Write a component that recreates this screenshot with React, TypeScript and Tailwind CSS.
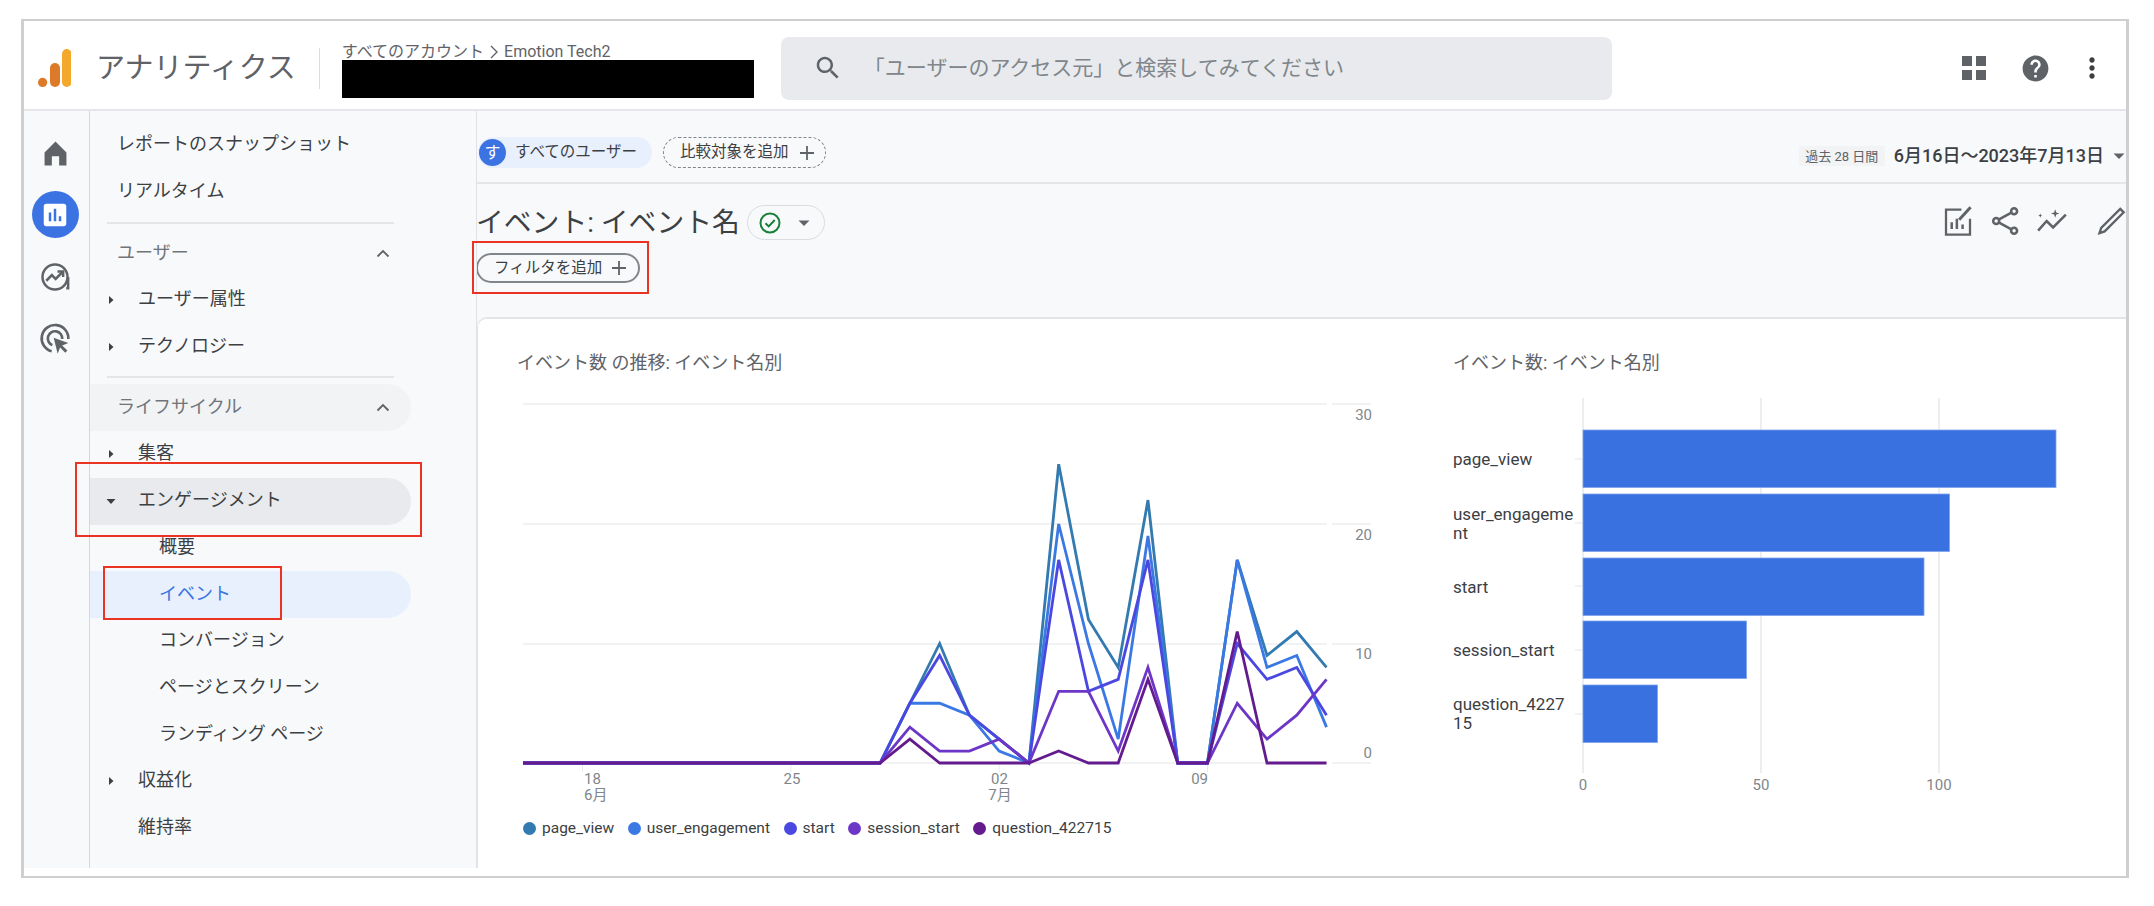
import React from "react";

const G = "#5f6368";

function Caret({ dir = "right" }: { dir?: "right" | "down" }) {
  return (
    <svg width="12" height="12" viewBox="0 0 12 12" className="shrink-0">
      {dir === "right" ? <path d="M4 2l4.5 4L4 10z" fill="#3c4043" /> : <path d="M1.5 4h9L6 9z" fill="#3c4043" />}
    </svg>
  );
}

function ChevronUp() {
  return (
    <svg width="16" height="16" viewBox="0 0 16 16" className="shrink-0">
      <path d="M2.5 10.5L8 5l5.5 5.5" fill="none" stroke="#5f6368" strokeWidth="1.8" />
    </svg>
  );
}

function Row({
  label,
  level = 0,
  caret,
  chevron,
  bg = "",
  text = "text-[#3c4043]",
}: {
  label: string;
  level?: 0 | 1 | 2;
  caret?: "right" | "down";
  chevron?: boolean;
  bg?: string;
  text?: string;
}) {
  const pad = level === 0 ? "pl-[27px]" : level === 1 ? "pl-[48px]" : "pl-[69px]";
  return (
    <div className={`relative h-[46.7px] w-[321px] rounded-r-full flex items-center pr-[20px] ${pad} ${bg}`}>
      {caret && (
        <span className="absolute left-[15px] top-1/2 -translate-y-1/2 flex">
          <Caret dir={caret} />
        </span>
      )}
      <span className={`pb-[2px] text-[18px] leading-none ${text}`}>{label}</span>
      {chevron && (
        <span className="ml-auto flex">
          <ChevronUp />
        </span>
      )}
    </div>
  );
}

function Divider({ top, bottom }: { top: string; bottom: string }) {
  return <div className={`ml-[17px] w-[287px] h-[2px] bg-[#e3e5e8] ${top} ${bottom}`} />;
}

function PlusIcon({ size = 18 }: { size?: number }) {
  return (
    <svg width={size} height={size} viewBox="0 0 18 18" className="shrink-0">
      <path d="M9 2v14M2 9h14" stroke="#5f6368" strokeWidth="1.8" fill="none" />
    </svg>
  );
}

const X = (i: number) => 523 + 29.76 * i;
const Y = (v: number) => 762 - 11.95 * v;
const Z = [0, 0, 0, 0, 0, 0, 0, 0, 0, 0, 0, 0];
const SERIES = [
  { name: "page_view", color: "#337ab0", v: [0, 5, 10, 4, 2, 0, 25, 12, 8, 22, 0, 0, 17, 9, 11, 8] },
  { name: "user_engagement", color: "#3a78e4", v: [0, 5, 5, 4, 1, 0, 20, 10, 2, 19, 0, 0, 17, 8, 9, 3] },
  { name: "start", color: "#4a48e0", v: [0, 5, 9, 4, 2, 0, 17, 6, 7, 17, 0, 0, 10, 7, 8, 4] },
  { name: "session_start", color: "#6c36c6", v: [0, 3, 1, 1, 2, 0, 6, 6, 1, 8, 0, 0, 5, 2, 4, 7] },
  { name: "question_422715", color: "#631b8d", v: [0, 2, 0, 0, 0, 0, 1, 0, 0, 7, 0, 0, 11, 0, 0, 0] },
];

function LineChart() {
  return (
    <svg width="880" height="420" viewBox="517 390 880 420" className="block">
      {[403, 523, 643, 762].map((y) => (
        <g key={y} stroke="#eceef0" strokeWidth="1.5">
          <line x1="523" x2="1327" y1={y} y2={y} />
          <line x1="1332" x2="1371" y1={y} y2={y} />
        </g>
      ))}
      {[2, 9, 16, 23].map((i) => (
        <line key={i} x1={X(i)} x2={X(i)} y1="762" y2="771" stroke="#e8eaed" />
      ))}
      <g fill="#80868b" fontSize="15" textAnchor="end">
        <text x="1372" y="418.5">30</text>
        <text x="1372" y="538.5">20</text>
        <text x="1372" y="657.5">10</text>
        <text x="1372" y="757">0</text>
      </g>
      <g fill="#80868b" fontSize="15">
        <text x="584" y="783">18</text>
        <text x="584" y="799">6月</text>
        <text x="792" y="783" textAnchor="middle">25</text>
        <text x="999.5" y="783" textAnchor="middle">02</text>
        <text x="1000" y="799" textAnchor="middle">7月</text>
        <text x="1208" y="783" textAnchor="end">09</text>
      </g>
      {SERIES.map((s) => (
        <polyline
          key={s.name}
          fill="none"
          stroke={s.color}
          strokeWidth="2.8"
          strokeLinejoin="miter"
          points={[...Z, ...s.v].map((v, i) => `${X(i)},${Y(v)}`).join(" ")}
        />
      ))}
    </svg>
  );
}

function BarChart() {
  const bars = [
    { y: 429, x2: 2056, c: 458 },
    { y: 493, x2: 1949.5, c: 522 },
    { y: 557, x2: 1924, c: 585 },
    { y: 620, x2: 1746.5, c: 649 },
    { y: 684, x2: 1657.5, c: 713 },
  ];
  return (
    <svg width="674" height="410" viewBox="1453 390 674 410" className="block">
      {[1583, 1761, 1939].map((x) => (
        <line key={x} x1={x} x2={x} y1="397" y2="772" stroke="#e3e5e8" strokeWidth="1.3" />
      ))}
      {bars.map((b) => (
        <g key={b.y}>
          <line x1="1575" x2="1583" y1={b.c} y2={b.c} stroke="#e3e5e8" />
          <rect x="1583" y={b.y} width={b.x2 - 1583} height="57.5" fill="#3971e0" stroke="#7ea4ee" strokeWidth="0.8" />
        </g>
      ))}
      <g fill="#3c4043" fontSize="17">
        <text x="1453" y="463.5">page_view</text>
        <text x="1453" y="518.5">user_engageme</text>
        <text x="1453" y="537.5">nt</text>
        <text x="1453" y="591.5">start</text>
        <text x="1453" y="654.5">session_start</text>
        <text x="1453" y="708.5">question_4227</text>
        <text x="1453" y="727.5">15</text>
      </g>
      <g fill="#80868b" fontSize="15" textAnchor="middle">
        <text x="1583" y="788.5">0</text>
        <text x="1761" y="788.5">50</text>
        <text x="1939" y="788.5">100</text>
      </g>
    </svg>
  );
}

function Legend() {
  return (
    <div className="flex items-center pl-[6px] mt-[10px] gap-x-[13.5px] text-[15.5px] leading-none text-[#3c4043]">
      {SERIES.map((s) => (
        <div key={s.name} className="flex items-center gap-x-[6px]">
          <span className="w-[13px] h-[13px] rounded-full" style={{ backgroundColor: s.color }} />
          <span>{s.name}</span>
        </div>
      ))}
    </div>
  );
}

export default function App() {
  return (
    <div className="relative w-[2154px] h-[906px] bg-white pt-[19px] pl-[21px] overflow-hidden font-['Roboto','Noto_Sans_CJK_JP',sans-serif]">
      <div className="w-[2108px] h-[859px] border-x-[3px] border-y-2 border-[#cfcfcf] bg-white overflow-hidden">
        {/* header */}
        <header className="h-[90px] border-b-2 border-[#e4e6e9] flex items-center pt-[6px] pl-[14px] pr-[18px]">
          <svg width="33" height="38" viewBox="0 0 33 38" className="shrink-0">
            <rect x="24" y="0" width="9.5" height="38" rx="4.7" fill="#f4a92c" />
            <rect x="12" y="14" width="10" height="24" rx="5" fill="#dc7a2a" />
            <circle cx="4.6" cy="33.4" r="4.6" fill="#dc7a2a" />
          </svg>
          <span className="ml-[25px] text-[29px] leading-none text-[#5f6368] whitespace-nowrap">アナリティクス</span>
          <span className="ml-[23px] w-px h-[41px] bg-[#dadce0]" />
          <div className="ml-[22px] mt-[2px] w-[412px] shrink-0 flex flex-col">
            <div className="flex items-center h-[20px] pt-[3px] text-[16px] leading-none text-[#5f6368] whitespace-nowrap">
              <span>すべてのアカウント</span>
              <svg width="16" height="16" viewBox="0 0 16 16" className="mx-[2px]">
                <path d="M5 2l6 6-6 6" fill="none" stroke="#5f6368" strokeWidth="1.4" />
              </svg>
              <span>Emotion Tech2</span>
            </div>
            <div className="h-[38px] bg-black" />
          </div>
          <div className="ml-[27px] w-[831px] h-[63px] rounded-[8px] bg-[#e8eaed] flex items-center pl-[32px]">
            <svg width="30" height="30" viewBox="0 0 24 24" className="shrink-0">
              <path
                fill={G}
                d="M15.5 14h-.79l-.28-.27C15.41 12.59 16 11.11 16 9.5 16 5.91 13.09 3 9.5 3S3 5.91 3 9.5 5.91 16 9.5 16c1.61 0 3.09-.59 4.23-1.57l.27.28v.79l5 4.99L20.49 19l-4.99-5zm-6 0C7.01 14 5 11.99 5 9.5S7.01 5 9.5 5 14 7.01 14 9.5 11.99 14 9.5 14z"
              />
            </svg>
            <span className="ml-[21px] text-[21px] leading-none text-[#80868b] whitespace-nowrap">「ユーザーのアクセス元」と検索してみてください</span>
          </div>
          <div className="ml-auto flex items-center">
            <svg width="24" height="24" viewBox="0 0 24 24" className="shrink-0">
              <path fill={G} d="M0 0h10v10H0zM14 0h10v10H14zM0 14h10v10H0zM14 14h10v10H14z" />
            </svg>
            <svg width="31" height="31" viewBox="0 0 24 24" className="ml-[34px] shrink-0">
              <path
                fill={G}
                d="M12 2C6.48 2 2 6.48 2 12s4.48 10 10 10 10-4.48 10-10S17.52 2 12 2zm1 17h-2v-2h2v2zm2.07-7.75l-.9.92C13.45 12.9 13 13.5 13 15h-2v-.5c0-1.1.45-2.1 1.17-2.83l1.24-1.26c.37-.36.59-.86.59-1.41 0-1.1-.9-2-2-2s-2 .9-2 2H8c0-2.21 1.79-4 4-4s4 1.79 4 4c0 .88-.36 1.68-.93 2.25z"
              />
            </svg>
            <svg width="32" height="32" viewBox="0 0 24 24" className="ml-[25px] shrink-0">
              <path
                fill="#3c4043"
                d="M12 8c1.1 0 2-.9 2-2s-.9-2-2-2-2 .9-2 2 .9 2 2 2zm0 2c-1.1 0-2 .9-2 2s.9 2 2 2 2-.9 2-2-.9-2-2-2zm0 6c-1.1 0-2 .9-2 2s.9 2 2 2 2-.9 2-2-.9-2-2-2z"
              />
            </svg>
          </div>
        </header>

        <div className="flex h-[757px]">
          {/* rail */}
          <aside className="w-[66px] shrink-0 bg-[#f8f9fb] border-r border-[#d5d7da] flex flex-col items-center pt-[18px] pr-[3px] gap-y-[15px]">
            <div className="w-[47px] h-[47px] flex items-center justify-center">
              <svg width="25" height="26" viewBox="0 0 24 24">
                <path fill={G} d="M1.5 11.5L12 1l10.5 10.5V24H15.5v-9h-7v9h-7z" />
              </svg>
            </div>
            <div className="w-[47px] h-[47px] rounded-full bg-[#3b74e2] flex items-center justify-center">
              <svg width="30" height="30" viewBox="0 0 24 24">
                <path
                  fill="#fff"
                  d="M19 3H5c-1.1 0-2 .9-2 2v14c0 1.1.9 2 2 2h14c1.1 0 2-.9 2-2V5c0-1.1-.9-2-2-2zM9 17H7v-7h2v7zm4 0h-2V7h2v10zm4 0h-2v-4h2v4z"
                />
              </svg>
            </div>
            <div className="w-[47px] h-[47px] flex items-center justify-center">
              <svg width="30" height="30" viewBox="0 0 24 24" fill="none" stroke={G} strokeWidth="2">
                <circle cx="12" cy="12" r="10" />
                <path d="M21 21h1.5v-9M5 15l4.5-4.5 3 3L18 8" />
                <path d="M14 7.5h4.5V12" />
              </svg>
            </div>
            <div className="w-[47px] h-[47px] flex items-center justify-center">
              <svg width="32" height="32" viewBox="0 0 24 24" fill="none" stroke={G} strokeWidth="2">
                <path d="M9.5 21.2A10 10 0 1 1 22 12" />
                <path d="M10 16.6A5.4 5.4 0 1 1 17.4 12" />
                <path d="M11 11l11 4-4.6 1.8 3.9 3.9-1.6 1.6-3.9-3.9L14 23z" fill={G} stroke="none" />
              </svg>
            </div>
          </aside>

          {/* nav */}
          <nav className="w-[387px] shrink-0 bg-[#f8f9fb] border-r border-[#e0e2e5] pt-[11px]">
            <Row label="レポートのスナップショット" />
            <Row label="リアルタイム" />
            <Divider top="mt-[7px]" bottom="mb-[6px]" />
            <Row label="ユーザー" chevron text="text-[#70757a]" />
            <Row label="ユーザー属性" level={1} caret="right" />
            <Row label="テクノロジー" level={1} caret="right" />
            <Divider top="mt-[6px]" bottom="mb-[6px]" />
            <Row label="ライフサイクル" chevron text="text-[#70757a]" bg="bg-[#f1f3f4]" />
            <Row label="集客" level={1} caret="right" />
            <Row label="エンゲージメント" level={1} caret="down" bg="bg-[#e8eaed]" />
            <Row label="概要" level={2} />
            <Row label="イベント" level={2} bg="bg-[#e8f0fe]" text="text-[#3b74e2]" />
            <Row label="コンバージョン" level={2} />
            <Row label="ページとスクリーン" level={2} />
            <Row label="ランディング ページ" level={2} />
            <Row label="収益化" level={1} caret="right" />
            <Row label="維持率" level={1} />
          </nav>

          {/* main */}
          <main className="flex-1 min-w-0 bg-[#f8f9fb] overflow-hidden flex flex-col">
            <div className="h-[73px] shrink-0 border-b-2 border-[#e4e6e9] flex items-start pt-[26px] pl-px">
              <div className="h-[31px] w-[174px] rounded-full bg-[#e8f0fe] flex items-center pl-[1px]">
                <span className="w-[27px] h-[27px] rounded-full bg-[#3b74e2] text-white text-[16px] leading-none flex items-center justify-center">す</span>
                <span className="ml-[9px] text-[15.5px] leading-none text-[#3c4043] whitespace-nowrap">すべてのユーザー</span>
              </div>
              <div className="ml-[11px] h-[31px] w-[163px] rounded-full border border-dashed border-[#80868b] flex items-center pl-[16px]">
                <span className="text-[15.5px] leading-none text-[#3c4043] whitespace-nowrap">比較対象を追加</span>
                <span className="ml-[9px] flex">
                  <PlusIcon />
                </span>
              </div>
              <div className="ml-auto flex items-center h-[20px] mt-[9px]">
                <span className="h-[20px] w-[86px] bg-[#f1f3f4] text-[13px] leading-none text-[#5f6368] flex items-center justify-center whitespace-nowrap">過去 28 日間</span>
                <span className="ml-[9px] text-[18px] font-medium leading-none text-[#3c4043] whitespace-nowrap">6月16日～2023年7月13日</span>
                <svg width="14" height="14" viewBox="0 0 14 14" className="ml-[8px]">
                  <path d="M1.5 4.5h11L7 10z" fill={G} />
                </svg>
              </div>
            </div>

            <div className="flex items-start justify-between pt-[21px] shrink-0 h-[58px]">
              <div className="flex items-center -ml-px gap-x-[7px]">
                <h1 className="text-[27.8px] font-normal leading-[35px] text-[#3c4043] whitespace-nowrap">イベント: イベント名</h1>
                <div className="w-[78px] h-[35px] rounded-full border border-[#dadce0] flex items-center pl-[10px]">
                  <svg width="24" height="24" viewBox="0 0 24 24" className="shrink-0">
                    <circle cx="12" cy="12" r="9.5" fill="none" stroke="#188038" strokeWidth="2" />
                    <path d="M7.5 12.2l3.2 3.2 6-6.4" fill="none" stroke="#188038" strokeWidth="2" />
                  </svg>
                  <svg width="14" height="14" viewBox="0 0 14 14" className="ml-[15px]">
                    <path d="M1.5 4.5h11L7 10z" fill={G} />
                  </svg>
                </div>
              </div>
              <div className="flex items-center mr-[-1px]">
                <svg width="32" height="32" viewBox="0 0 28 28" fill="none" stroke={G} strokeWidth="2">
                  <path d="M17 4H3.5v22h21V12" />
                  <path d="M8.5 21v-6M13 21v-9M18 21v-4" strokeWidth="2.2" />
                  <path d="M15 13L25 2" strokeWidth="2.6" />
                </svg>
                <svg width="30" height="30" viewBox="0 0 26 26" fill="none" stroke={G} strokeWidth="2.2" className="ml-[17px]">
                  <circle cx="20" cy="4.5" r="2.6" />
                  <circle cx="4.5" cy="13" r="2.6" />
                  <circle cx="20" cy="21.5" r="2.6" />
                  <path d="M7 11.5L17.7 5.8M7 14.5l10.7 5.7" />
                </svg>
                <svg width="32" height="26" viewBox="0 0 30 24" fill="none" stroke={G} strokeWidth="2.4" className="ml-[15px]">
                  <path d="M2 21l8-9 6 6L28 6" />
                  <path d="M17 4l1-3 1 3 3 1-3 1-1 3-1-3-3-1zM4 9l.6-1.6L6 7l-1.4-.6L4 5l-.6 1.4L2 7l1.4.4z" fill={G} stroke="none" />
                </svg>
                <svg width="30" height="30" viewBox="0 0 26 26" fill="none" stroke={G} strokeWidth="2" className="ml-[28px] mr-[1px]">
                  <path d="M21 2.5l3 3L7.5 22 3 23.5 4.5 19z" />
                </svg>
              </div>
            </div>

            <div className="mt-[11px] -ml-px shrink-0 w-[164px] h-[30px] rounded-full border-[2.5px] border-[#80868b] flex items-center pl-[16px]">
              <span className="pt-[2px] text-[15.5px] leading-none text-[#3c4043] whitespace-nowrap">フィルタを追加</span>
              <span className="ml-[8px] flex">
                <PlusIcon />
              </span>
            </div>

            <section className="mt-[34px] flex-1 min-h-0 rounded-tl-[10px] bg-white border-t-2 border-l border-[#e3e5e8] flex overflow-hidden">
              <div className="w-[936px] shrink-0 pl-[39px] pt-[32px]">
                <h2 className="h-[24px] text-[18px] font-normal leading-[24px] text-[#5f6368] whitespace-nowrap">イベント数 の推移: イベント名別</h2>
                <div className="mt-[16px]">
                  <LineChart />
                  <Legend />
                </div>
              </div>
              <div className="flex-1 min-w-0 pt-[32px] pl-[39px]">
                <h2 className="h-[24px] text-[18px] font-normal leading-[24px] text-[#5f6368] whitespace-nowrap">イベント数: イベント名別</h2>
                <div className="mt-[16px]">
                  <BarChart />
                </div>
              </div>
            </section>
          </main>
        </div>
      </div>

      {/* red annotation boxes */}
      <div className="absolute left-[472px] top-[241px] w-[177px] h-[53px] border-[2.5px] border-[#ea3323]" />
      <div className="absolute left-[75px] top-[462px] w-[347px] h-[75px] border-[2.5px] border-[#ea3323]" />
      <div className="absolute left-[103px] top-[566px] w-[179px] h-[54px] border-[2.5px] border-[#ea3323]" />
    </div>
  );
}
